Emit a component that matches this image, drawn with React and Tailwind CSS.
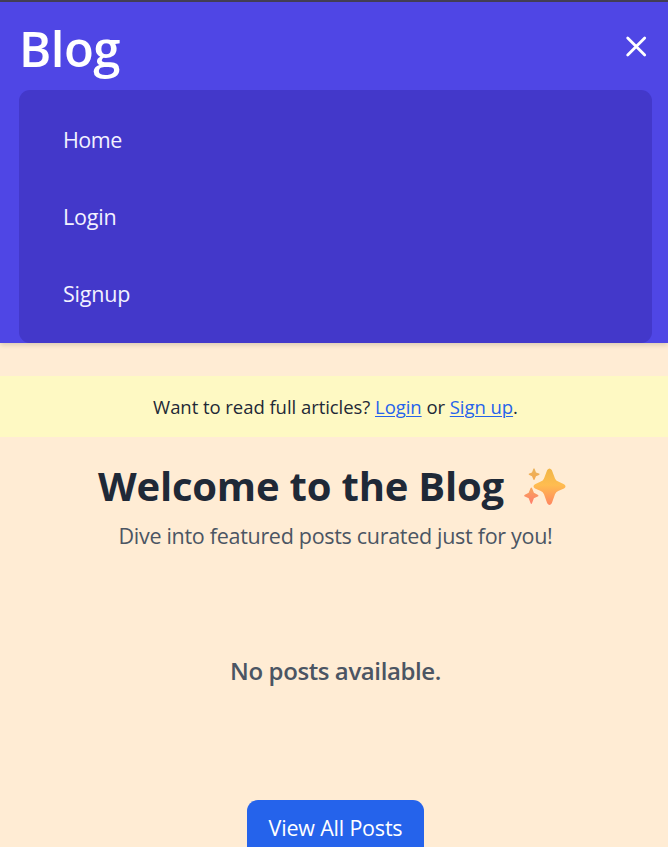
function CloseIcon() {
  return (
    <svg width="22" height="22" viewBox="0 0 22 22" fill="none" stroke="white" strokeWidth="2.8" strokeLinecap="round">
      <path d="M2.7 2 L19.7 19 M19.7 2 L2.7 19" />
    </svg>
  );
}

function Sparkles() {
  return (
    <svg width="42" height="38" viewBox="0 0 42 38">
      <defs>
        <linearGradient id="spark" x1="0" y1="0" x2="0" y2="1">
          <stop offset="0" stopColor="#f0b648" />
          <stop offset="0.45" stopColor="#ffbd50" />
          <stop offset="1" stopColor="#ff8660" />
        </linearGradient>
        <linearGradient id="sparkTop" x1="0" y1="0" x2="0" y2="1">
          <stop offset="0" stopColor="#e9b45c" />
          <stop offset="1" stopColor="#f5a850" />
        </linearGradient>
        <linearGradient id="sparkLow" x1="0" y1="0" x2="0" y2="1">
          <stop offset="0" stopColor="#f7a65a" />
          <stop offset="1" stopColor="#ff7d6c" />
        </linearGradient>
      </defs>
      <path fill="url(#spark)" d="M23.2 2 Q25.5 -1 27.8 2 L31 10.4 Q32 12.6 34.2 13.5 L40 16.3 Q43 18.5 40 20.6 L34.2 23 Q32 24 31 26.2 L27.8 35.3 Q25.5 38.8 23.2 35.3 L20 26.2 Q19 24 16.8 23 L11 20.6 Q8 18.5 11 16.3 L16.8 13.5 Q19 12.6 20 10.4 Z" />
      <path fill="url(#sparkTop)" d="M9.4 0.8 Q10 -0.5 10.6 0.8 L12 4.4 L15 5.6 Q16.2 6.2 15 6.9 L12 8.2 L10.6 11.4 Q10 12.7 9.4 11.4 L8 8.2 L5.3 6.9 Q4 6.2 5.3 5.6 L8 4.4 Z" />
      <path fill="url(#sparkLow)" d="M6.5 20.3 Q7.3 18.5 8.1 20.3 L9.9 24.8 L13.7 26.8 Q15.2 27.7 13.7 28.5 L9.9 30.3 L8.1 35 Q7.3 37 6.5 35 L4.7 30.3 L0.9 28.5 Q-0.6 27.7 0.9 26.8 L4.7 24.8 Z" />
    </svg>
  );
}

const links = [
  { label: "Home", style: "tracking-[-0.5px]" },
  { label: "Login", style: "tracking-[-0.2px]" },
  { label: "Signup", style: "tracking-[-0.2px]" },
];

export default function App() {
  return (
    <div className="h-[847px] overflow-hidden bg-[#ffecd4] font-['Open_Sans','Noto_Sans',sans-serif]">
      <div className="h-[2px] bg-[#443f57]" />
      <header className="h-[341px] bg-[#4f46e5] pl-[19px] pr-4 shadow-[0_2px_5px_rgba(0,0,0,0.15)]">
        <div className="flex h-[88px] items-start justify-between pr-[5px]">
          <h1 className="pt-[11px] text-[49px] font-semibold leading-[70px] tracking-[-0.5px] text-white">Blog</h1>
          <button className="mt-[34px]" aria-label="Close menu"><CloseIcon /></button>
        </div>
        <nav className="flex h-[253px] flex-col rounded-[11px] bg-[#4338ca] pl-11 pt-[12px]">
          {links.map((link) => (
            <a key={link.label} className={`flex h-[77px] shrink-0 items-center text-[21.5px] font-medium text-[#f3f2ff] ${link.style}`}>
              <span>{link.label}</span>
            </a>
          ))}
        </nav>
      </header>
      <div className="mt-[33px] flex h-[61px] items-center justify-center bg-[#fef9c3] pl-[3px]">
        <p className="whitespace-nowrap text-[18.5px] tracking-[-0.05px] text-[#1f2937]">
          Want to read full articles? <a className="text-[#2563eb] underline decoration-1 underline-offset-2">Login</a> or <a className="text-[#2563eb] underline decoration-1 underline-offset-2">Sign up</a>.
        </p>
      </div>
      <main className="flex flex-col items-center">
        <div className="mt-[25px] flex h-[50px] w-[668px] items-center pl-[98px] text-[#1f2937]">
          <h2 className="w-[426px] whitespace-nowrap pb-[2px] text-[40px] font-bold tracking-[-0.2px]">Welcome to the Blog</h2>
          <Sparkles />
        </div>
        <p className="mt-[8px] whitespace-nowrap pl-[3px] text-[21.5px] leading-[32px] tracking-[-0.3px] text-[#4b5563]">Dive into featured posts curated just for you!</p>
        <p className="mt-[101px] whitespace-nowrap pl-[3px] text-[24px] font-semibold leading-[36px] tracking-[-0.4px] text-[#4b5563]">No posts available.</p>
        <button className="ml-[3px] mt-[111px] h-[58px] w-[177px] whitespace-nowrap rounded-[11px] bg-[#2563eb] pb-[2px] text-[21.5px] tracking-[-0.2px] text-white">View All Posts</button>
      </main>
    </div>
  );
}
